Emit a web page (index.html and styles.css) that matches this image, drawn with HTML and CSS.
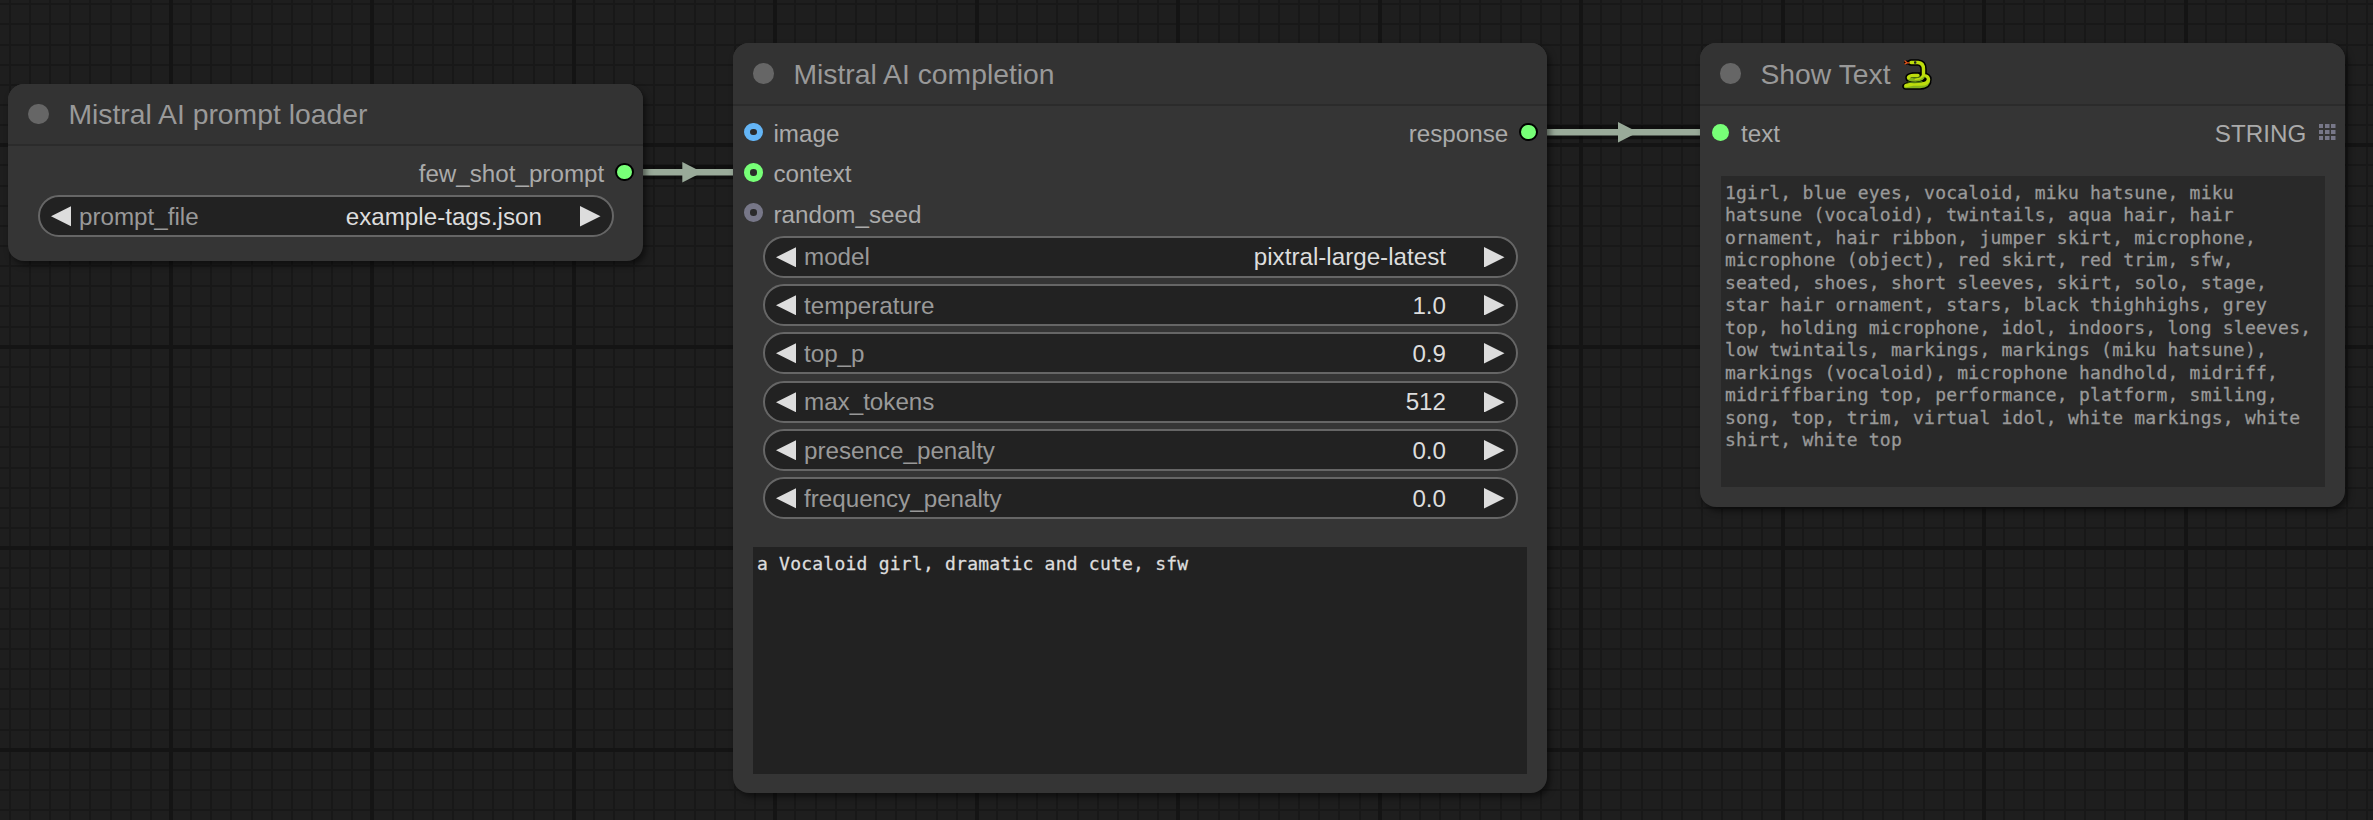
FILE: index.html
```html
<!DOCTYPE html>
<html lang="en">
<head>
<meta charset="utf-8">
<title>Node graph</title>
<link rel="stylesheet" href="styles.css">
</head>
<body>
<main class="canvas">
  <svg class="layer" id="grid" width="2373" height="820" aria-hidden="true"></svg>
  <svg class="layer" width="2373" height="820" aria-hidden="true">
    <g class="link-edge"><path d="M625 172.3H754"/><path d="M1529 132.3H1720"/></g>
    <g class="link"><path d="M625 172.3H754"/><path d="M1529 132.3H1720"/></g>
    <g class="link-arrow"><path d="M682.3 162v20.6l20-10.3z"/><path d="M1618 122v20.6l20-10.3z"/></g>
  </svg>

  <section class="node node-loader">
    <header class="head"><i class="bullet"></i><h2>Mistral AI prompt loader</h2></header>
    <div class="body">
      <div class="slot"><span class="out">few_shot_prompt</span><i class="dot linked"></i></div>
      <div class="widgets">
        <div class="widget"><svg class="arrow" viewBox="0 0 20 20"><path d="M20 0v20L0 10z"/></svg><span class="name">prompt_file</span><span class="value">example-tags.json</span><svg class="arrow" viewBox="0 0 20 20"><path d="M0 0v20l20-10z"/></svg></div>
      </div>
    </div>
  </section>

  <section class="node node-completion">
    <header class="head"><i class="bullet"></i><h2>Mistral AI completion</h2></header>
    <div class="body">
      <div class="slot"><i class="dot ring blue"></i><span class="in">image</span><span class="out">response</span><i class="dot linked"></i></div>
      <div class="slot"><i class="dot ring green"></i><span class="in">context</span></div>
      <div class="slot"><i class="dot ring gray"></i><span class="in">random_seed</span></div>
      <div class="widgets">
        <div class="widget"><svg class="arrow" viewBox="0 0 20 20"><path d="M20 0v20L0 10z"/></svg><span class="name">model</span><span class="value">pixtral-large-latest</span><svg class="arrow" viewBox="0 0 20 20"><path d="M0 0v20l20-10z"/></svg></div>
        <div class="widget"><svg class="arrow" viewBox="0 0 20 20"><path d="M20 0v20L0 10z"/></svg><span class="name">temperature</span><span class="value">1.0</span><svg class="arrow" viewBox="0 0 20 20"><path d="M0 0v20l20-10z"/></svg></div>
        <div class="widget"><svg class="arrow" viewBox="0 0 20 20"><path d="M20 0v20L0 10z"/></svg><span class="name">top_p</span><span class="value">0.9</span><svg class="arrow" viewBox="0 0 20 20"><path d="M0 0v20l20-10z"/></svg></div>
        <div class="widget"><svg class="arrow" viewBox="0 0 20 20"><path d="M20 0v20L0 10z"/></svg><span class="name">max_tokens</span><span class="value">512</span><svg class="arrow" viewBox="0 0 20 20"><path d="M0 0v20l20-10z"/></svg></div>
        <div class="widget"><svg class="arrow" viewBox="0 0 20 20"><path d="M20 0v20L0 10z"/></svg><span class="name">presence_penalty</span><span class="value">0.0</span><svg class="arrow" viewBox="0 0 20 20"><path d="M0 0v20l20-10z"/></svg></div>
        <div class="widget"><svg class="arrow" viewBox="0 0 20 20"><path d="M20 0v20L0 10z"/></svg><span class="name">frequency_penalty</span><span class="value">0.0</span><svg class="arrow" viewBox="0 0 20 20"><path d="M0 0v20l20-10z"/></svg></div>
      </div>
      <div class="textbox prompt">a Vocaloid girl, dramatic and cute, sfw</div>
    </div>
  </section>

  <section class="node node-show">
    <header class="head"><i class="bullet"></i><h2>Show Text</h2>
      <svg class="snake" viewBox="0 0 30 32" role="img" aria-label="snake">
        <g fill="none" stroke-linecap="round" stroke-linejoin="round">
          <path stroke="#000" stroke-width="6.500" d="M9 4.500h7Q21.500 5 21.500 11v6q0 4-6.500 4.500H9Q6.500 21 6.500 19.500T11 17.500h10q5.500.5 5.500 4t-6.500 4H10L3.500 28.500H18q6 0 8-4"/>
          <path stroke="#000" stroke-width="4" d="M4 4.500h4"/>
          <path stroke="#85b31b" stroke-width="3.400" d="M21.500 17q0 4.500-8 5Q6.500 22 6.500 19.700M26.500 22q0 6-8.500 6.500H3.500"/>
          <path stroke="#bddd0c" stroke-width="3.400" d="M9 4.500h7Q21.500 5 21.500 11v6M6.500 19.700q.5-2.200 5.500-2.200h4M24 18q2.500 1 2.500 3.500-.5 4.500-7.500 4.500h-8l-7 1.500"/>
          <path stroke="#bddd0c" stroke-width="2" d="M21.500 14q0 7-8 7"/>
          <path stroke="#4f7a10" stroke-width="1.200" d="M10.500 19.500q4 1 8-1M6 24q7 1.400 14-.4"/>
          <path stroke="#e2531b" stroke-width="1.300" d="M7 4.800H5L3 3M5 4.800L3 5.800"/>
        </g>
        <rect x="12" y="3.200" width="2.400" height="2.600" rx=".8" fill="#222"/>
      </svg>
    </header>
    <div class="body">
      <div class="slot"><i class="dot plain"></i><span class="in">text</span><span class="out">STRING</span>
        <svg class="list-port" viewBox="0 0 17 17"><path d="M0 0h4v4H0zM6 0h4.500v4H6zM12 0h4.500v4H12zM0 6h4v4H0zM6 6h4.500v4H6zM12 6h4.500v4H12zM0 12h4v4H0zM6 12h4.500v4H6zM12 12h4.500v4H12z"/></svg>
      </div>
      <div class="textbox result">1girl, blue eyes, vocaloid, miku hatsune, miku
hatsune (vocaloid), twintails, aqua hair, hair
ornament, hair ribbon, jumper skirt, microphone,
microphone (object), red skirt, red trim, sfw,
seated, shoes, short sleeves, skirt, solo, stage,
star hair ornament, stars, black thighhighs, grey
top, holding microphone, idol, indoors, long sleeves,
low twintails, markings, markings (miku hatsune),
markings (vocaloid), microphone handhold, midriff,
midriffbaring top, performance, platform, smiling,
song, top, trim, virtual idol, white markings, white
shirt, white top</div>
    </div>
  </section>
</main>
<script src="grid.js"></script>
</body>
</html>
```
FILE: styles.css
```css
* { box-sizing: border-box; }
body { margin: 0; background: #1e1e1e; font-family: "Liberation Sans", Arial, sans-serif; }
.canvas { position: relative; width: 2373px; height: 820px; overflow: hidden; background: #1e1e1e; }
.layer { position: absolute; inset: 0; }
.minor { fill: #181818; }
.major { fill: #141414; }

.link-edge { stroke: rgba(0, 0, 0, .5); stroke-width: 14; }
.link { stroke: #9a9; stroke-width: 6.600; }
.link-arrow { fill: #9a9; }

.node { position: absolute; background: #353535; border-radius: 16px; box-shadow: 3px 4px 6px rgba(0, 0, 0, .5); }
.node-loader { left: 8px; top: 84px; width: 635px; height: 177px; }
.node-completion { left: 733px; top: 43px; width: 814px; height: 750px; }
.node-show { left: 1700px; top: 43px; width: 645px; height: 463.500px; }

.head { display: flex; align-items: center; height: 63px; padding-left: 20px; border-bottom: 2px solid #2b2b2b; background: #333; border-radius: 16px 16px 0 0; }
.node-loader .head { height: 62px; }
.bullet { width: 20.500px; height: 20.500px; border-radius: 50%; background: #666; }
.head h2 { margin: 0 0 0 20px; font-size: 28.300px; font-weight: 400; line-height: 40px; color: #999; white-space: nowrap; }
.snake { width: 30px; height: 32px; margin-left: 11px; }

.body { padding-top: 6px; }
.slot { display: flex; align-items: center; height: 40.300px; padding: 0 9.300px 0 11px; font-size: 24.200px; line-height: 28px; color: #aaa; }
.in, .out { padding-top: 4px; }
.in { margin-left: 11px; }
.out { margin-left: auto; margin-right: 11px; }
.dot { width: 18.500px; height: 18.500px; border-radius: 50%; }
.linked { background: #7f7; border: 2px solid #000; }
.plain { width: 17px; height: 17px; background: #7f7; }
.ring { border: 6.500px solid; background: #2a2a2a; }
.blue { border-color: #64b5f6; }
.green { border-color: #7f7; }
.gray { border-color: #778; }
.node-show .slot { padding-left: 12px; }
.node-show .in { margin-left: 12px; }
.node-show .out { margin-right: 12.500px; }
.list-port { width: 17px; height: 17px; fill: #778; }

.widgets { display: flex; flex-direction: column; gap: 6.300px; padding: 3px 29.500px 0; }
.widget { display: flex; align-items: center; height: 42px; padding: 0 11px; border: 2px solid #666; border-radius: 21px; background: #222; font-size: 24.200px; line-height: 28px; }
.arrow { width: 20.500px; height: 20.500px; fill: #ddd; }
.name, .value { padding-top: 1px; }
.name { margin-left: 8px; color: #999; }
.value { margin-left: auto; margin-right: 38px; color: #ddd; }

.textbox { font-family: "DejaVu Sans Mono", monospace; font-size: 18px; letter-spacing: .225px; line-height: 22.500px; white-space: pre; overflow: hidden; -webkit-text-stroke: .3px currentColor; }
.prompt { margin: 27.500px 20.500px 0 20px; height: 227px; padding: 6px 4px; background: #222; color: #ddd; }
.result { margin: 24px 20px 0 21px; height: 311px; padding: 5.500px 4px; background: #292929; color: #999; }
```
FILE: grid.js
```js
// Draws the canvas grid; every tenth line is a heavier one.
(function () {
  var svg = document.getElementById("grid");
  var step = 20.145;
  function line(vertical, pos, major) {
    var r = document.createElementNS("http://www.w3.org/2000/svg", "rect");
    var w = major ? 4 : 2;
    r.setAttribute(vertical ? "x" : "y", Math.round(pos - w / 2));
    r.setAttribute(vertical ? "width" : "height", w);
    r.setAttribute(vertical ? "height" : "width", "100%");
    r.setAttribute("class", major ? "major" : "minor");
    svg.appendChild(r);
  }
  [false, true].forEach(function (major) {
    for (var k = -9; k < 112; k++) {
      if ((k % 10 === 0) !== major) continue;
      line(true, 171 + k * step, major);
      if (k < 35) line(false, 145.3 + k * step, major);
    }
  });
})();
```
